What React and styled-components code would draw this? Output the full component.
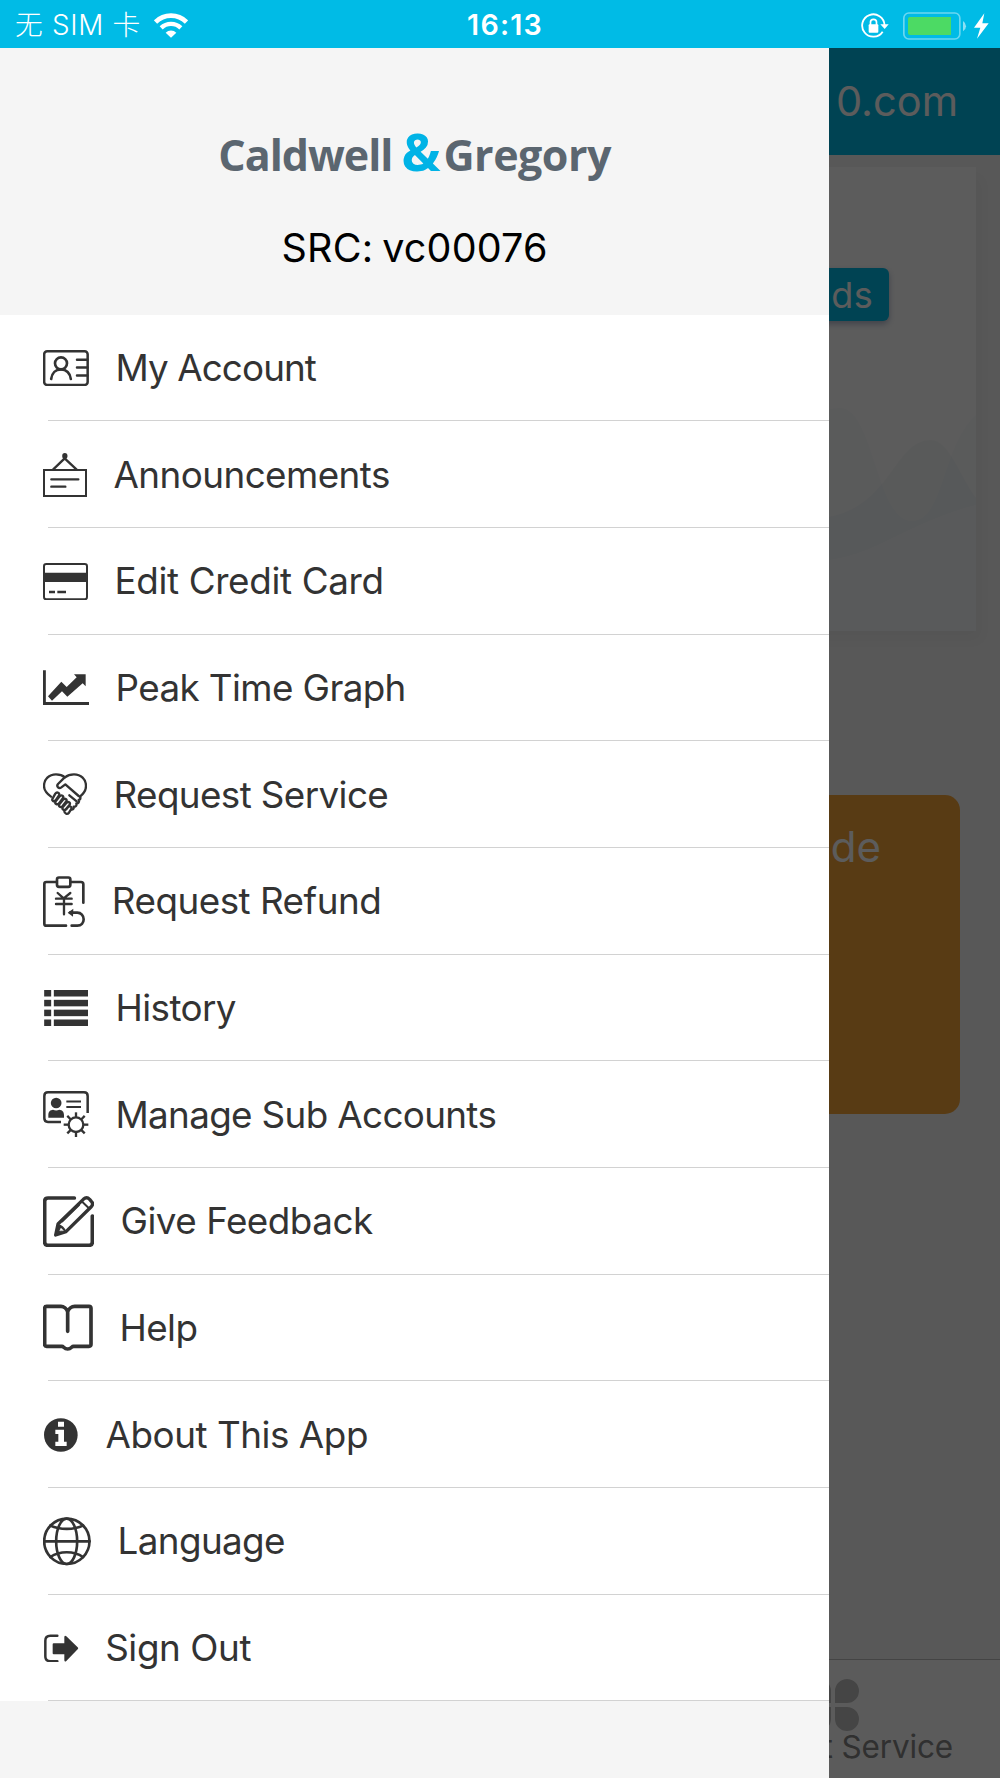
import React from "react";
import styled, { createGlobalStyle } from "styled-components";

const GlobalStyle = createGlobalStyle`
  *, *::before, *::after { box-sizing: border-box; }
  body { margin: 0; }
  svg { display: block; flex: none; }
`;

const INK = "#333333";
const CYAN = "#00bbe6";

const Screen = styled.div`
  position: relative;
  display: flex;
  flex-direction: column;
  width: 1000px;
  height: 1778px;
  overflow: hidden;
  background: #f4f4f4;
  font-family: Inter, "Noto Sans CJK SC", sans-serif;
  color: ${INK};
`;

/* ---------- status bar ---------- */

const StatusBar = styled.header`
  display: grid;
  grid-template-columns: 1fr auto 1fr;
  align-items: center;
  flex: none;
  height: 48px;
  padding: 3px 11px 0 15px;
  background: ${CYAN};
  color: #fff;
  line-height: 1;
`;

const Carrier = styled.div`
  display: flex;
  align-items: center;
  gap: 13px;
  font-size: 27.8px;
  font-weight: 300;
  letter-spacing: 0.7px;
  white-space: nowrap;
`;

const Clock = styled.time`
  font-size: 28.6px;
  font-weight: 600;
  letter-spacing: 1.2px;
  padding-left: 6px;
`;

const StatusIcons = styled.div`
  display: flex;
  align-items: center;
  justify-content: flex-end;
`;

const BatteryGap = styled.span`
  width: ${(p) => p.$w}px;
`;

/* ---------- page behind the drawer ---------- */

const Page = styled.main`
  display: flex;
  flex-direction: column;
  flex: 1;
`;

const TitleBar = styled.div`
  display: flex;
  align-items: center;
  justify-content: flex-end;
  height: 107px;
  padding: 0 42px 2px 0;
  background: ${CYAN};
  color: #fff;
  font-size: 41.5px;
`;

const BalanceCard = styled.section`
  display: flex;
  flex-direction: column;
  justify-content: space-between;
  align-items: flex-end;
  height: 464px;
  margin: 12px 24px 0;
  padding-top: 101px;
  background: #fff;
  box-shadow: 6px 10px 14px rgba(0, 0, 0, 0.04);
`;

const AddFunds = styled.button`
  height: 53px;
  margin-right: 87px;
  padding: 1px 16px 0;
  border: 0;
  border-radius: 6px;
  background: ${CYAN};
  box-shadow: 0 3px 6px rgba(30, 50, 110, 0.35);
  color: #fff;
  font: 400 36px/53px Inter, sans-serif;
  letter-spacing: 0.3px;
`;

const ScanCard = styled.section`
  align-self: flex-end;
  width: 420px;
  height: 319px;
  margin: 164px 40px 0 0;
  padding: 26px 79px;
  border-radius: 15px;
  background: #f4a438;
  color: #fff;
  font-size: 42px;
  line-height: 51px;
  text-align: right;
  white-space: nowrap;
`;

const TabBar = styled.nav`
  display: flex;
  justify-content: flex-end;
  height: 119px;
  margin-top: auto;
  padding: 19px 47px 0;
  border-top: 1px solid #bcbcbc;
  background: #fdfdfd;
`;

const Tab = styled.div`
  display: flex;
  flex-direction: column;
  align-items: center;
  color: #858585;
  font-size: 31.5px;
  line-height: 30px;
  letter-spacing: -0.15px;
`;

const Scrim = styled.div`
  position: absolute;
  inset: 48px 0 0;
  background: rgba(0, 0, 0, 0.64);
`;

/* ---------- drawer ---------- */

const Drawer = styled.aside`
  position: absolute;
  top: 48px;
  bottom: 0;
  left: 0;
  width: 829.3px;
  display: flex;
  flex-direction: column;
  background: #f5f5f5;
`;

const DrawerHead = styled.div`
  display: flex;
  flex-direction: column;
  align-items: center;
  height: 266.67px;
  padding-top: 73px;
`;

const Logo = styled.div`
  display: flex;
  align-items: baseline;
  height: 60px;
  color: #5b6670;
  font: 700 43px/60px "Open Sans", sans-serif;
  white-space: nowrap;
`;

const LogoWord = styled.span`
  letter-spacing: ${(p) => p.$track}px;
`;

const Ampersand = styled.span`
  margin: 0 3px 0 9px;
  color: #00b3e6;
  font-size: 52px;
  font-weight: 700;
`;

const SourceCode = styled.div`
  margin-top: 43px;
  color: #000;
  font-size: 39.5px;
  line-height: 48px;
  letter-spacing: 0.2px;
  word-spacing: -2.5px;
`;

const MenuList = styled.ul`
  margin: 0;
  padding: 0;
  list-style: none;
  background: #fff;
`;

const MenuItem = styled.li`
  display: flex;
  flex-direction: column;
  height: 106.67px;
`;

const MenuRow = styled.div`
  display: flex;
  align-items: center;
  flex: 1;
  padding: 1px 0 0 43px;
  gap: 26.5px;
`;

const MenuLabel = styled.span`
  font-size: 36.8px;
  line-height: 46px;
  letter-spacing: ${(p) => p.$track}px;
  white-space: nowrap;
`;

const Divider = styled.div`
  height: 1px;
  margin-left: 48px;
  background: #d2d2d2;
`;

/* Menu drawings use three units per pixel. */
const Glyph = ({ box, children }) => {
  const [, , w, h] = box;
  return (
    <svg
      width={w / 3}
      height={h / 3}
      viewBox={box.join(" ")}
      fill="none"
      stroke={INK}
      strokeWidth="7"
      strokeLinecap="round"
      strokeLinejoin="round"
    >
      {children}
    </svg>
  );
};

const AccountIcon = () => (
  <Glyph box={[129, 119, 138, 109]}>
    <rect x="132.500" y="123" width="130.500" height="101" rx="9" strokeWidth="7.500" />
    <circle cx="183" cy="159" r="18" strokeWidth="8" />
    <path d="M153.500 206c2-18 14-29 29.500-29s28 11 29.500 29" strokeWidth="8" />
    <path d="M231 148h31M231 171.500h31M231 195.500h31" strokeWidth="7.500" />
  </Glyph>
);

const AnnouncementIcon = () => (
  <Glyph box={[129, 426, 132, 132]}>
    <rect x="132" y="477" width="126" height="78" strokeWidth="6" strokeLinejoin="miter" />
    <path d="M159 476l35-34 36 34M154 505h81M154 527h42" strokeWidth="7" />
    <ellipse cx="194.500" cy="435" rx="8" ry="9" fill={INK} stroke="none" />
  </Glyph>
);

const CardIcon = () => (
  <Glyph box={[129, 757, 135, 112]}>
    <rect x="132" y="760" width="129" height="106" rx="7" strokeWidth="6" />
    <path d="M131 800h131" strokeWidth="28" strokeLinecap="butt" />
    <path d="M147 844h18M172 844h26" strokeWidth="7" strokeLinecap="butt" />
  </Glyph>
);

const GraphIcon = () => (
  <Glyph box={[129, 119, 138, 106]}>
    <path d="M133 120v99.500h134" strokeWidth="9" strokeLinecap="butt" strokeLinejoin="miter" />
    <path
      d="M144 198l40-44 16 16 30-29-8-9h35v36l-9-9-46 40-16-16-30 28z"
      fill={INK}
      stroke="none"
    />
  </Glyph>
);

const ServiceIcon = () => (
  <Glyph box={[129, 431, 132, 127]}>
    <g strokeWidth="7">
      <path d="M153 502c-14-10-21-18-21-32 0-20 15-35 36-35 12 0 20 3 27 9 7-6 15-9 27-9 21 0 36 15 36 35 0 13-6 22-18 32" />
      <path d="M194 444l-20 20c-6 8 3 15 10 10l12-9 40 35" />
      <path d="M208 498l22 18" />
      <path d="M158 507l8-14c5-7 14-2 11 5l-10 15c-5 6-13 1-9-6z" />
      <path d="M167 516l12-15c6-6 13-1 10 5l-12 16c-6 6-14 1-10-6z" />
      <path d="M178 525l11-14c6-6 13-1 10 5l-11 14c-6 6-14 1-10-5z" />
      <path d="M188 534l11-13c6-6 13-1 10 5l-10 13c-6 6-14 1-11-5z" />
      <path d="M193 545l11-12c5-5 13 0 10 6l-7 11c-5 6-14 4-14-5" />
      <path d="M240 502c3 4 1 9-4 10 3 6-1 11-7 10 2 6-1 11-8 10 1 6-1 9-7 9" />
    </g>
  </Glyph>
);

const RefundIcon = () => (
  <Glyph box={[129, 735, 127, 153]}>
    <path d="M169 753h-30q-6 0-6 6v119q0 6 6 6h59M213 753h30q7 0 7 7v55" strokeWidth="8" />
    <rect x="171" y="739.500" width="40" height="28" rx="6" strokeWidth="8" />
    <path d="M173 786l18 16 20-16M168 803h47M168 819h47M192 802v48" />
    <path d="M215 884h17c12 0 19-8 19-19s-8-20-19-20h-22" strokeWidth="8" />
    <path d="M203 845l17-12-1 24z" fill={INK} stroke="none" />
  </Glyph>
);

const HistoryIcon = () => (
  <Glyph box={[129, 120, 138, 108]}>
    <g fill={INK} stroke="none">
      {[120, 149.5, 179, 208.5].map((y) => (
        <React.Fragment key={y}>
          <rect x="132.500" y={y} width="21" height="19.500" />
          <rect x="161.500" y={y} width="102.500" height="19.500" />
        </React.Fragment>
      ))}
    </g>
  </Glyph>
);

const ManageIcon = () => (
  <Glyph box={[129, 422, 138, 139]}>
    <path d="M183 515h-39q-11 0-11-11v-67q0-11 11-11h108q11 0 11 11v51" strokeLinecap="butt" strokeWidth="7.500" />
    <circle cx="168.500" cy="458" r="16" fill={INK} stroke="none" />
    <path d="M145 502v-8c0-11 6-15 14-16 6 3 13 3 19 0 8 1 14 5 14 16v8z" fill={INK} stroke="none" />
    <path d="M199 453.500h44M199 470h44" strokeWidth="6" strokeLinecap="butt" />
    <circle cx="228" cy="523" r="22" />
    {[0, 45, 90, 135, 180, 225, 270, 315].map((a) => (
      <path key={a} d="M228 500v-14" strokeLinecap="butt" transform={`rotate(${a} 228 523)`} />
    ))}
  </Glyph>
);

const FeedbackIcon = () => (
  <Glyph box={[129, 737, 153, 154]}>
    <path d="M223 743h-79q-10 0-10 10v122q0 10 10 10h123q10 0 10-10v-78" strokeWidth="11" />
    <path d="M167 854l7-33 76-74q10-9 19 0l5 6q8 8-1 17l-75 74z" strokeWidth="10" />
    <path d="M245 753l21 20M237 764l-50 49" strokeWidth="6" />
    <path d="M166 855l8-32q16 4 23 21z" fill={INK} strokeWidth="4" />
    <path d="M180 840l3-6 6 6z" fill="#fff" stroke="#fff" strokeWidth="2" />
  </Glyph>
);

const HelpIcon = () => (
  <Glyph box={[129, 101, 150, 141]}>
    <path
      d="M203 183v-59c-3-9-12-16-20-16h-43q-6 0-6 6v108q0 6 6 6h46c5 0 6 8 17 8s12-8 17-8h47q6 0 6-6v-108q0-6-6-6h-43c-9 0-18 7-21 16"
      strokeWidth="11"
    />
  </Glyph>
);

const AboutIcon = () => (
  <Glyph box={[129, 443, 108, 102]}>
    <circle cx="182.500" cy="494" r="50.500" fill={INK} stroke="none" />
    <path d="M174 454h18v15h-18zM166 478h26v36h8v13h-34v-13h9v-23h-9z" fill="#fff" stroke="none" />
  </Glyph>
);

const LanguageIcon = () => (
  <Glyph box={[129, 741, 144, 146]}>
    <g strokeWidth="8">
      <circle cx="200.500" cy="814" r="68" />
      <ellipse cx="200" cy="814" rx="31.500" ry="68" />
      <path d="M132 814h137M151 767c28 13 71 13 98 0M151 861c28-19 71-19 98 0" />
    </g>
  </Glyph>
);

const SignOutIcon = () => (
  <Glyph box={[129, 1093, 107, 85]}>
    <path d="M172 1098.500h-21q-15 0-15 15v46q0 15 15 15h21" strokeWidth="7.500" />
    <path
      d="M161 1121h32v-19q1-6 6-2l34 33q3 3 0 6l-34 35q-5 4-6-2v-18h-32q-3 0-3-3v-27q0-3 3-3z"
      fill={INK}
      stroke="none"
    />
  </Glyph>
);

const WifiIcon = () => (
  <svg width="34" height="25" viewBox="464 35 102 75" fill="none" stroke="#fff">
    <path d="M468.500 62a66 66 0 0 1 93 0" strokeWidth="14" />
    <path d="M485.500 79.500a42 42 0 0 1 59 0" strokeWidth="13" />
    <path d="M499 94a23 23 0 0 1 32 0l-16 15z" fill="#fff" stroke="none" />
  </svg>
);

const LockIcon = () => (
  <svg width="28" height="26" viewBox="583 35 84 78" fill="none" stroke="#fff" strokeWidth="5.500">
    <path d="M648 91a33.500 33.500 0 1 1 5.500-20" />
    <path d="M641 69h25l-12 14z" fill="#fff" stroke="none" />
    <rect x="606" y="69" width="29" height="25" rx="3" fill="#fff" stroke="none" />
    <path d="M611.500 71v-9q0-8 9-8t9 8v9" strokeWidth="5" />
  </svg>
);

const BatteryIcon = () => (
  <svg width="64" height="28" viewBox="709 30 192 84">
    <rect x="711.500" y="33" width="168" height="78" rx="15" fill="none" stroke="#fff" strokeOpacity=".42" strokeWidth="5" />
    <path d="M730 45h123v54h-123q-6 0-6-6v-42q0-6 6-6z" fill="#4cda64" />
    <path d="M889 57q9 6 9 15.500t-9 15.500z" fill="#fff" fillOpacity=".55" />
  </svg>
);

const BoltIcon = () => (
  <svg width="15" height="26" viewBox="420 35 45 78">
    <path d="M451 36l-31 43h19l-10 33 35-46h-19z" fill="#fff" />
  </svg>
);

const Waves = () => (
  <svg width="952" height="276" viewBox="0 0 952 276">
    <path
      d="M0 90C260 170 420 100 620 150C700 170 760 53 816 53C850 53 852 166 888 166C920 166 918 90 952 60V276H0z"
      fill="rgba(0, 80, 170, 0.025)"
    />
    <path
      d="M0 110C300 190 560 200 805 162C868 150 870 85 907 85C925 85 935 120 952 143V276H0z"
      fill="rgba(0, 110, 110, 0.03)"
    />
    <path d="M0 210C200 180 500 225 805 205C850 200 890 165 952 150V276H0z" fill="#f7f9fc" />
  </svg>
);

const PetalsIcon = () => (
  <svg width="52" height="53" viewBox="0 0 52 53" fill="#c0c0c0">
    <path d="M24 24V12a12 12 0 1 0-12 12zM28 24V12a12 12 0 1 1 12 12zM24 28v12a12 12 0 1 1-12-12zM28 28v12a12 12 0 1 0 12-12z" />
  </svg>
);

const MENU = [
  { label: "My Account", Icon: AccountIcon, track: -0.9 },
  { label: "Announcements", Icon: AnnouncementIcon, track: -0.55 },
  { label: "Edit Credit Card", Icon: CardIcon, track: -0.35 },
  { label: "Peak Time Graph", Icon: GraphIcon },
  { label: "Request Service", Icon: ServiceIcon },
  { label: "Request Refund", Icon: RefundIcon, track: -0.5 },
  { label: "History", Icon: HistoryIcon },
  { label: "Manage Sub Accounts", Icon: ManageIcon, track: -0.65 },
  { label: "Give Feedback", Icon: FeedbackIcon, track: -0.5 },
  { label: "Help", Icon: HelpIcon },
  { label: "About This App", Icon: AboutIcon, track: -0.45 },
  { label: "Language", Icon: LanguageIcon, track: -0.6 },
  { label: "Sign Out", Icon: SignOutIcon, track: -0.4 },
];

export default function App() {
  return (
    <>
      <GlobalStyle />
      <Screen>
        <StatusBar>
          <Carrier>
            无 SIM 卡
            <WifiIcon />
          </Carrier>
          <Clock>16:13</Clock>
          <StatusIcons>
            <LockIcon />
            <BatteryGap $w={14} />
            <BatteryIcon />
            <BatteryGap $w={7} />
            <BoltIcon />
          </StatusIcons>
        </StatusBar>

        <Page>
          <TitleBar>0.com</TitleBar>
          <BalanceCard>
            <AddFunds>Funds</AddFunds>
            <Waves />
          </BalanceCard>
          <ScanCard>Code</ScanCard>
          <TabBar>
            <Tab>
              <PetalsIcon />
              Request Service
            </Tab>
          </TabBar>
        </Page>

        <Scrim />

        <Drawer>
          <DrawerHead>
            <Logo>
              <LogoWord $track={-1}>Caldwell</LogoWord>
              <Ampersand>&amp;</Ampersand>
              <LogoWord $track={-0.5}>Gregory</LogoWord>
            </Logo>
            <SourceCode>SRC: vc00076</SourceCode>
          </DrawerHead>
          <MenuList>
            {MENU.map(({ label, Icon, track = -0.6 }) => (
              <MenuItem key={label}>
                <MenuRow>
                  <Icon />
                  <MenuLabel $track={track}>{label}</MenuLabel>
                </MenuRow>
                <Divider />
              </MenuItem>
            ))}
          </MenuList>
        </Drawer>
      </Screen>
    </>
  );
}
